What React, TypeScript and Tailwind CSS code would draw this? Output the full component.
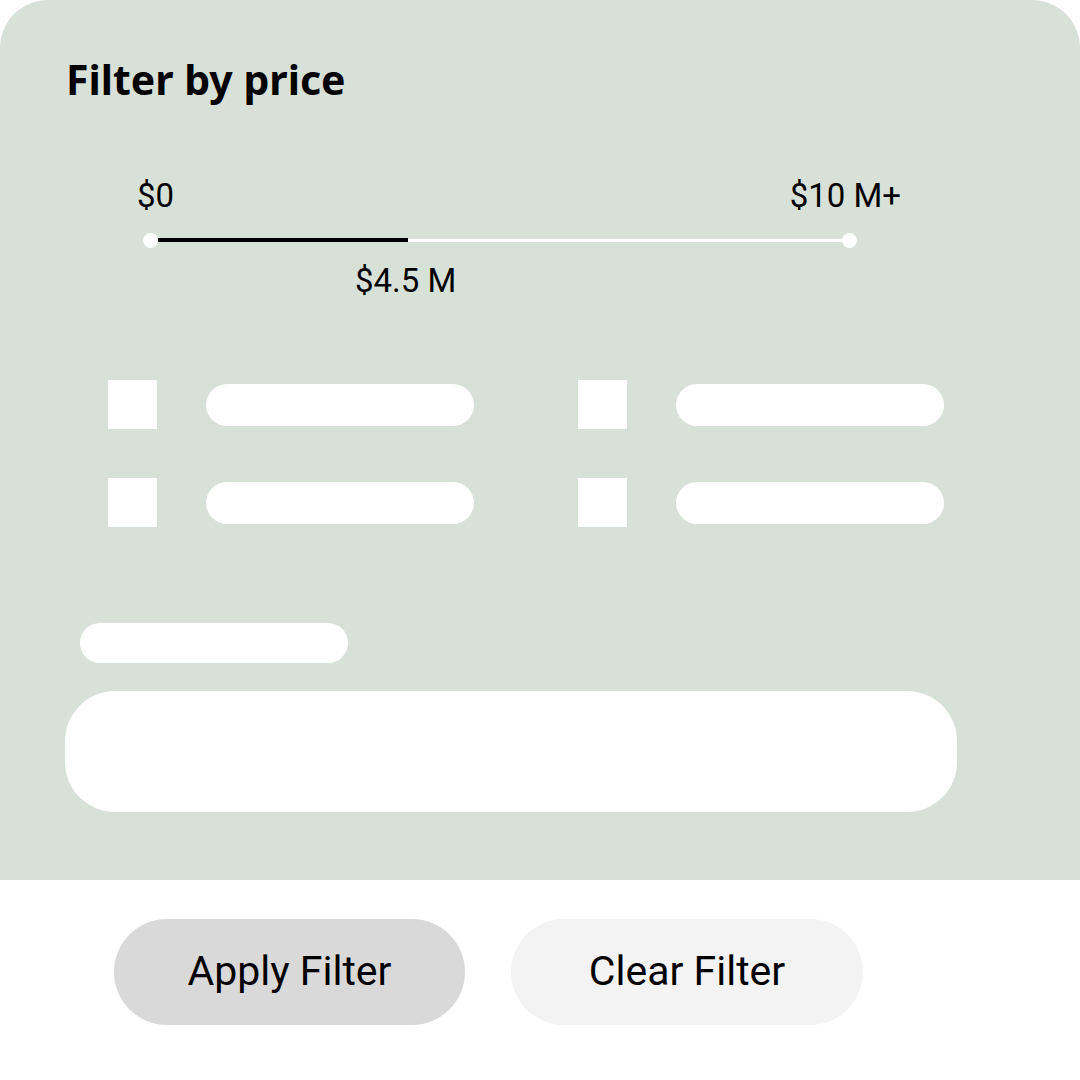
import React from 'react';

const rows = [0, 1];

const CheckRow = () => (
  <div className="flex items-center gap-[49px]">
    <div className="w-[49px] h-[49px] bg-white" />
    <div className="w-[268px] h-[42px] rounded-full bg-white" />
  </div>
);

export default function App() {
  return (
    <div
      className="w-[1080px] h-[1080px] bg-white flex flex-col"
      style={{ fontFamily: 'Roboto, "Noto Sans", sans-serif' }}
    >
      <div className="h-[880px] bg-[#d7e1d7] rounded-t-[48px] flex flex-col">
        <h1
          className="ml-[66px] mt-[54px] text-[41px] leading-[50px] font-bold text-black"
          style={{ fontFamily: '"Noto Sans", sans-serif' }}
        >
          Filter by price
        </h1>

        {/* price slider */}
        <div className="mt-[73px] ml-[137px] w-[764px] flex justify-between text-[33px] leading-[38px] text-black">
          <span>$0</span>
          <span>$10 M+</span>
        </div>
        <div className="relative mt-[24px] ml-[150px] w-[700px] h-[3px] bg-white">
          <div className="absolute -left-[7px] -top-[6px] w-[15px] h-[15px] rounded-full bg-white" />
          <div className="absolute -right-[7px] -top-[6px] w-[15px] h-[15px] rounded-full bg-white" />
          <div className="absolute left-[8px] -top-[1px] w-[250px] h-[4px] bg-black" />
        </div>
        <div className="mt-[20px] ml-[355px] text-[33px] leading-[38px] text-black">$4.5 M</div>

        {/* options */}
        <div className="mt-[80px] ml-[108px] grid grid-cols-2 gap-x-[104px] gap-y-[49px] w-[836px]">
          {rows.map((r) => (
            <React.Fragment key={r}>
              <CheckRow />
              <CheckRow />
            </React.Fragment>
          ))}
        </div>

        <div className="mt-[96px] ml-[80px] w-[268px] h-[40px] rounded-full bg-white" />
        <div className="mt-[28px] ml-[65px] w-[892px] h-[121px] rounded-[50px] bg-white" />
      </div>

      <div className="flex gap-[46px] ml-[114px] mt-[39px]">
        <button className="w-[351px] h-[106px] rounded-full bg-[#d9d9d9] text-[41px] text-black">
          Apply Filter
        </button>
        <button className="w-[352px] h-[106px] rounded-full bg-[#f3f3f3] text-[41px] text-black">
          Clear Filter
        </button>
      </div>
    </div>
  );
}
